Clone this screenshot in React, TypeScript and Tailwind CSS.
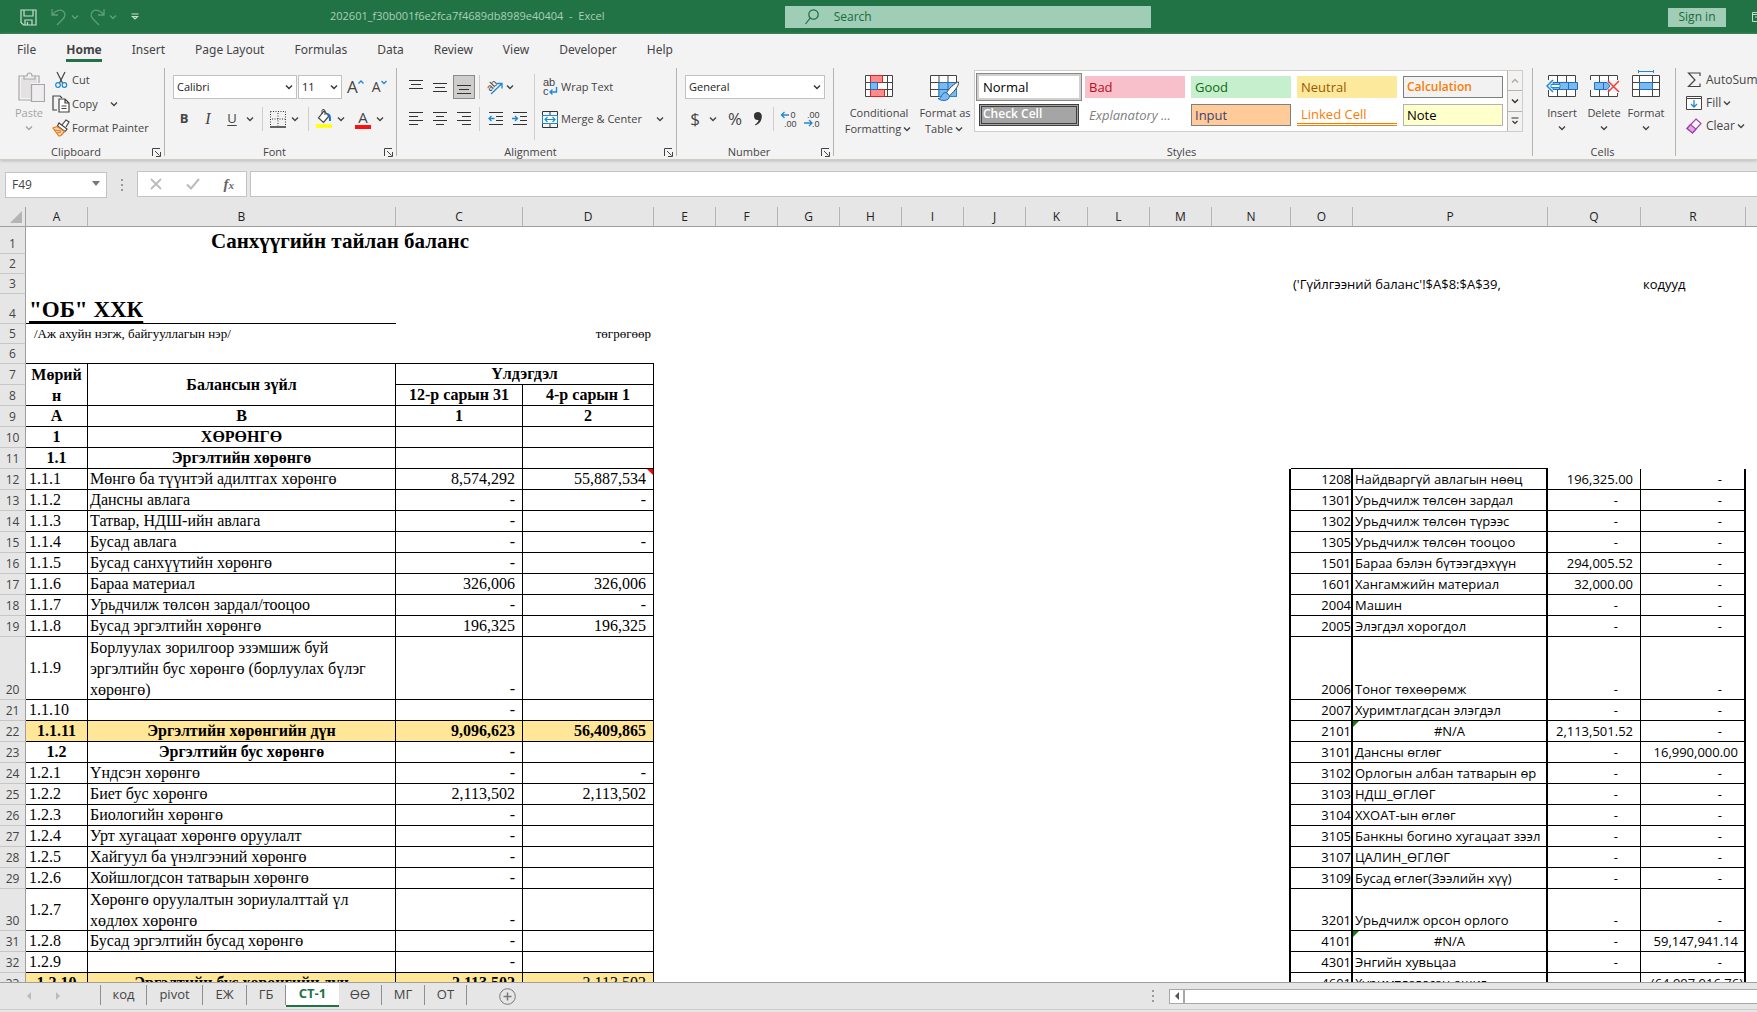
import { ReactNode } from 'react';
import clsx from 'clsx';

type BalanceRow = {
  n: number;
  code: string;
  name: string;
  c?: string;
  d?: string;
  kind?: 'head' | 'total';
  tall?: 2 | 3;
  note?: boolean;
};

const BALANCE: BalanceRow[] = [
  { n: 9, code: 'А', name: 'В', c: '1', d: '2', kind: 'head' },
  { n: 10, code: '1', name: 'ХӨРӨНГӨ', kind: 'head' },
  { n: 11, code: '1.1', name: 'Эргэлтийн хөрөнгө', kind: 'head' },
  { n: 12, code: '1.1.1', name: 'Мөнгө ба түүнтэй адилтгах хөрөнгө', c: '8,574,292', d: '55,887,534', note: true },
  { n: 13, code: '1.1.2', name: 'Дансны авлага', c: '-', d: '-' },
  { n: 14, code: '1.1.3', name: 'Татвар, НДШ-ийн авлага', c: '-' },
  { n: 15, code: '1.1.4', name: 'Бусад авлага', c: '-', d: '-' },
  { n: 16, code: '1.1.5', name: 'Бусад санхүүтийн хөрөнгө', c: '-' },
  { n: 17, code: '1.1.6', name: 'Бараа материал', c: '326,006', d: '326,006' },
  { n: 18, code: '1.1.7', name: 'Урьдчилж төлсөн зардал/тооцоо', c: '-', d: '-' },
  { n: 19, code: '1.1.8', name: 'Бусад эргэлтийн хөрөнгө', c: '196,325', d: '196,325' },
  { n: 20, code: '1.1.9', name: 'Борлуулах зорилгоор эзэмшиж буй эргэлтийн бус хөрөнгө (борлуулах бүлэг хөрөнгө)', c: '-', tall: 3 },
  { n: 21, code: '1.1.10', name: '', c: '-' },
  { n: 22, code: '1.1.11', name: 'Эргэлтийн хөрөнгийн дүн', c: '9,096,623', d: '56,409,865', kind: 'total' },
  { n: 23, code: '1.2', name: 'Эргэлтийн бус хөрөнгө', c: '-', kind: 'head' },
  { n: 24, code: '1.2.1', name: 'Үндсэн хөрөнгө', c: '-', d: '-' },
  { n: 25, code: '1.2.2', name: 'Биет бус хөрөнгө', c: '2,113,502', d: '2,113,502' },
  { n: 26, code: '1.2.3', name: 'Биологийн хөрөнгө', c: '-' },
  { n: 27, code: '1.2.4', name: 'Урт хугацаат хөрөнгө оруулалт', c: '-' },
  { n: 28, code: '1.2.5', name: 'Хайгуул ба үнэлгээний хөрөнгө', c: '-' },
  { n: 29, code: '1.2.6', name: 'Хойшлогдсон татварын хөрөнгө', c: '-' },
  { n: 30, code: '1.2.7', name: 'Хөрөнгө оруулалтын зориулалттай үл хөдлөх хөрөнгө', c: '-', tall: 2 },
  { n: 31, code: '1.2.8', name: 'Бусад эргэлтийн бусад хөрөнгө', c: '-' },
  { n: 32, code: '1.2.9', name: '', c: '-' },
  { n: 33, code: '1.2.10', name: 'Эргэлтийн бус хөрөнгийн дүн', c: '2,113,502', d: '2,113,502', kind: 'total' },
];

// account code, account name, debit, credit - keyed by sheet row
const ACCOUNTS: Record<number, [string, string, string, string]> = {
  12: ['1208', 'Найдваргүй авлагын нөөц', '196,325.00', '-'],
  13: ['1301', 'Урьдчилж төлсөн зардал', '-', '-'],
  14: ['1302', 'Урьдчилж төлсөн түрээс', '-', '-'],
  15: ['1305', 'Урьдчилж төлсөн тооцоо', '-', '-'],
  16: ['1501', 'Бараа бэлэн бүтээгдэхүүн', '294,005.52', '-'],
  17: ['1601', 'Хангамжийн материал', '32,000.00', '-'],
  18: ['2004', 'Машин', '-', '-'],
  19: ['2005', 'Элэгдэл хорогдол', '-', '-'],
  20: ['2006', 'Тоног төхөөрөмж', '-', '-'],
  21: ['2007', 'Хуримтлагдсан элэгдэл', '-', '-'],
  22: ['2101', '#N/A', '2,113,501.52', '-'],
  23: ['3101', 'Дансны өглөг', '-', '16,990,000.00'],
  24: ['3102', 'Орлогын албан татварын өр', '-', '-'],
  25: ['3103', 'НДШ_ӨГЛӨГ', '-', '-'],
  26: ['3104', 'ХХОАТ-ын өглөг', '-', '-'],
  27: ['3105', 'Банкны богино хугацаат зээл', '-', '-'],
  28: ['3107', 'ЦАЛИН_ӨГЛӨГ', '-', '-'],
  29: ['3109', 'Бусад өглөг(Зээлийн хүү)', '-', '-'],
  30: ['3201', 'Урьдчилж орсон орлого', '-', '-'],
  31: ['4101', '#N/A', '-', '59,147,941.14'],
  32: ['4301', 'Энгийн хувьцаа', '-', '-'],
  33: ['4601', 'Хуримтлагдсан ашиг', '', '(64,997,916.76)'],
};

const COLUMNS = 'ABCDEFGHIJKLMNOPQR'.split('');
const COL_WIDTHS = [
  'w-[26px]', 'w-[62px]', 'w-[308px]', 'w-[127px]', 'w-[131px]',
  'w-[62px]', 'w-[62px]', 'w-[62px]', 'w-[62px]', 'w-[62px]', 'w-[62px]', 'w-[62px]', 'w-[62px]', 'w-[62px]',
  'w-[79px]', 'w-[62px]', 'w-[195px]', 'w-[93px]', 'w-[105px]',
];

function Chevron({ className }: { className?: string }) {
  return (
    <svg viewBox="0 0 12 12" className={clsx('w-3 h-3 shrink-0', className)} fill="none" stroke="currentColor" strokeWidth="1.4">
      <path d="M3 4.5l3 3 3-3" />
    </svg>
  );
}

function Sep() {
  return <div className="w-px h-6 bg-[#d0cecc]" />;
}

function Group({ label, launcher = true, className, children }: { label: string; launcher?: boolean; className?: string; children: ReactNode }) {
  return (
    <section className={clsx('flex flex-col h-[94px] shrink-0', className)}>
      <div className="flex flex-1">{children}</div>
      <div className="flex items-center h-4 pr-[3px]">
        <span className="flex-1 text-center">{label}</span>
        {launcher && (
          <button aria-label={`${label} settings`}>
            <svg viewBox="0 0 9 9" className="w-[9px] h-[9px]" fill="none" stroke="#444" strokeWidth="1">
              <path d="M.5 8V.5H8M3 3l4.5 4.5M8.500 4v4.500H4" />
            </svg>
          </button>
        )}
      </div>
    </section>
  );
}

function GroupLine() {
  return <div className="w-px h-[88px] mt-0.5 bg-[#b5b3b0] shrink-0" />;
}

function AlignIcon({ lines }: { lines: [number, number, number][] }) {
  return (
    <svg viewBox="0 0 14 16" className="w-[14px] h-4" stroke="#333" strokeWidth="1">
      {lines.map(([x1, x2, y]) => <path key={y} d={`M${x1} ${y}.5H${x2}`} />)}
    </svg>
  );
}

function IconButton({ label, active, children }: { label: string; active?: boolean; children: ReactNode }) {
  return (
    <button
      aria-label={label}
      className={clsx('w-[22px] h-6 flex items-center justify-center', active && 'bg-[#cfcdcb] border border-[#8c8a88]')}
    >
      {children}
    </button>
  );
}

function BigButton({ className, icon, children }: { className?: string; icon: ReactNode; children: ReactNode }) {
  return (
    <button className={clsx('flex flex-col items-center pt-[5px] leading-4 self-start', className)}>
      {icon}
      <span className="flex flex-col items-center mt-1 whitespace-nowrap">{children}</span>
    </button>
  );
}

function TitleBar() {
  return (
    <header className="flex items-center h-[34px] shrink-0 bg-[#217346] text-[#a9cfb8] text-[11px]">
      <div className="flex items-center pl-5 w-[330px] shrink-0">
        <button aria-label="Save">
          <svg viewBox="0 0 17 17" className="w-[17px] h-[17px]" fill="none" stroke="#c4dfce" strokeWidth="1.2">
            <path d="M1 1h15v15H3.500L1 13.500zM4 1v6h9V1M5 16v-5h7v5M7.500 13v3" />
          </svg>
        </button>
        <button aria-label="Undo" className="flex items-center ml-3.5 text-[#5f9d7b]">
          <svg viewBox="0 0 16 18" className="w-4 h-[18px]" fill="none" stroke="currentColor" strokeWidth="1.3">
            <path d="M1 1v6h6M1.500 6.500C5 2 10 1 12.500 3.500c3 3 1 6-1.500 8.500l-5 5" />
          </svg>
          <Chevron className="ml-0.5" />
        </button>
        <button aria-label="Redo" className="flex items-center ml-2 text-[#5f9d7b]">
          <svg viewBox="0 0 16 18" className="w-4 h-[18px]" fill="none" stroke="currentColor" strokeWidth="1.3">
            <path d="M15 1v6H9M14.500 6.500C11 2 6 1 3.500 3.500c-3 3-1 6 1.500 8.500l5 5" />
          </svg>
          <Chevron className="ml-0.5" />
        </button>
        <button aria-label="Customize toolbar" className="ml-3">
          <svg viewBox="0 0 8 8" className="w-2 h-2" fill="none" stroke="#c4dfce" strokeWidth="1.2">
            <path d="M.5 1h7M1.500 3.500L4 6l2.500-2.500z" />
          </svg>
        </button>
      </div>
      <span className="flex-[3_3_0%] min-w-[272px] pb-0.5 whitespace-pre">202601_f30b001f6e2fca7f4689db8989e40404  -  Excel</span>
      <label className="flex items-center w-[366px] h-[22px] bg-[#a0cdb5] text-[#1c6b40] text-xs">
        <svg viewBox="0 0 14 16" className="w-[14px] h-4 ml-5 shrink-0" fill="none" stroke="currentColor" strokeWidth="1.2">
          <circle cx="8.500" cy="5.500" r="4.700" />
          <path d="M5.200 9L.5 15" />
        </svg>
        <input aria-label="Search" placeholder="Search" className="flex-1 ml-[15px] min-w-0 bg-transparent outline-none placeholder:text-[#1c6b40]" />
      </label>
      <div className="flex flex-[4_4_0%] items-center justify-end overflow-hidden">
        <button className="w-[58px] h-[19px] bg-[#a0cdb5] text-[#1c6b40] text-xs leading-[18px]">Sign in</button>
        <svg viewBox="0 0 5 10" className="w-[5px] h-[10px] ml-[26px] shrink-0" fill="none" stroke="#c4dfce">
          <path d="M5 .5H.5v9H5M.5 2.500H5M3 5h2" />
        </svg>
      </div>
    </header>
  );
}

function Tabs() {
  const tabs = ['File', 'Home', 'Insert', 'Page Layout', 'Formulas', 'Data', 'Review', 'View', 'Developer', 'Help'];
  return (
    <nav className="flex h-8 shrink-0 pl-[17px] gap-[30px] pt-[7px] text-xs text-[#444] font-['Noto_Sans',sans-serif]">
      {tabs.map((t) => (
        <button
          key={t}
          className={clsx('h-[21px] leading-[18px] whitespace-nowrap flex flex-col', t === 'Home' && 'font-bold border-b-[3px] border-[#217346]')}
        >
          {t}
        </button>
      ))}
    </nav>
  );
}

function Clipboard() {
  return (
    <Group label="Clipboard" className="w-[164px]">
      <button className="flex flex-col items-center w-8 ml-[13px] pt-1.5 self-start leading-4 text-[#a6a4a2]">
        <svg viewBox="0 0 27 30" className="w-[27px] h-[30px] ml-1" fill="none" stroke="#a8a6a4" strokeWidth="1.2">
          <path d="M6 4H1v24h12M17 4h4v7" />
          <path d="M3 6h16v5h-6v15H3z" fill="#e3e1e1" stroke="none" />
          <path d="M6 7V4h3c0-4 5-4 5 0h3v3z" fill="#f3f2f1" />
          <path d="M13.500 12.500h13v17h-13z" fill="#efedf0" />
        </svg>
        <span className="mt-[3px]">Paste</span>
        <Chevron className="mt-px" />
      </button>
      <div className="flex flex-col ml-[7px] pt-0.5">
        <button className="flex items-center h-6">
          <svg viewBox="0 0 16 18" className="w-[18px] h-[18px] mr-0.5" fill="none" strokeWidth="1.200">
            <path d="M4 1l5.500 11M12 1L6.500 12" stroke="#444" />
            <circle cx="5" cy="14" r="2.300" stroke="#1e88d2" />
            <circle cx="11.400" cy="14" r="2.300" stroke="#1e88d2" />
          </svg>
          Cut
        </button>
        <button className="flex items-center h-6">
          <svg viewBox="0 0 18 18" className="w-[18px] h-[18px] mr-0.5" fill="none" stroke="#444" strokeWidth="1.200">
            <path d="M5 15H1V1h7l2 2" />
            <path d="M7 4h6l4 4v9H7zM13 4v4h4M9.500 11h5M9.500 13.500h5" fill="#fff" />
          </svg>
          Copy
          <Chevron className="ml-2.5" />
        </button>
        <button className="flex items-center h-6 whitespace-nowrap">
          <svg viewBox="0 0 18 18" className="w-[18px] h-[18px] mr-0.5" fill="none" strokeWidth="1.200">
            <path d="M10 6l4-5 3 2-3 5" stroke="#444" fill="#fff" />
            <path d="M7 4l8 6-2 2.500L5.500 7z" stroke="#444" fill="#fff" />
            <path d="M5 7.500L1 9l6 8 2-.5 3.500-4z" stroke="#e07a1f" fill="#fbd9b0" />
            <path d="M3 11l6 1M5 14l4-1" stroke="#e07a1f" />
          </svg>
          Format Painter
        </button>
      </div>
    </Group>
  );
}

function SelectBox({ label, value, options, className }: { label: string; value: string; options: string[]; className: string }) {
  return (
    <div className={clsx('relative h-6 shrink-0', className)}>
      <select aria-label={label} defaultValue={value} className="appearance-none w-full h-full pl-[3px] bg-white border border-[#c3c1bf] text-[#222]">
        {options.map((o) => <option key={o}>{o}</option>)}
      </select>
      <Chevron className="absolute right-0.5 top-1.5 text-[#333] pointer-events-none" />
    </div>
  );
}

function FontGroup() {
  return (
    <Group label="Font" className="w-[231px]">
      <div className="flex flex-col gap-2 pt-[9px]">
        <div className="flex items-center h-6 pl-2">
          <SelectBox label="Font" value="Calibri" options={['Calibri', 'Arial', 'Times New Roman']} className="w-[124px]" />
          <SelectBox label="Font size" value="11" options={['10', '11', '12']} className="w-[44px] ml-px" />
          <button className="flex ml-[5px] text-[17px] leading-6" aria-label="Increase font size">
            A
            <svg viewBox="0 0 6 6" className="w-1.5 h-1.5 mt-1" fill="none" stroke="#1e88d2" strokeWidth="1.3"><path d="M.5 4.500L3 2l2.500 2.500" /></svg>
          </button>
          <button className="flex ml-2 text-sm leading-6" aria-label="Decrease font size">
            A
            <svg viewBox="0 0 6 6" className="w-1.5 h-1.5 mt-1" fill="none" stroke="#1e88d2" strokeWidth="1.3"><path d="M.5 2L3 4.500 5.500 2" /></svg>
          </button>
        </div>
        <div className="flex items-center h-6 pl-[7px] text-[13px]">
          <button className="w-6 font-bold">B</button>
          <button className="w-6 italic font-['Liberation_Serif',serif] text-base">I</button>
          <button className="w-6 underline underline-offset-2">U</button>
          <Chevron />
          <div className="ml-1.5 mr-[7px]"><Sep /></div>
          <button aria-label="Borders">
            <svg viewBox="0 0 16 17" className="w-4 h-[17px]" fill="none" stroke="#333">
              <path d="M.5.5h15M.5.5v15M15.500.5v15M8 2v13M2 8h13" strokeDasharray="1 1.500" />
              <path d="M0 16h16" strokeWidth="1.500" />
            </svg>
          </button>
          <Chevron className="ml-[3px]" />
          <div className="ml-[7px] mr-1.5"><Sep /></div>
          <button aria-label="Fill color">
            <svg viewBox="0 0 18 20" className="w-[18px] h-5" fill="none">
              <path d="M9 2L3.500 9l5 4.500L14 7z" fill="#fff" stroke="#444" strokeWidth="1.200" />
              <path d="M7 5V1.500c0-1.500 3-1.500 3 .5v4" stroke="#444" />
              <path d="M12 5c3 0 3 3 3 7" stroke="#1e6fc0" strokeWidth="2" />
              <path d="M1 15h16v4H1z" fill="#ffff20" />
            </svg>
          </button>
          <Chevron className="ml-0.5" />
          <button aria-label="Font color" className="flex flex-col items-center w-[18px] ml-[7px] text-[15px] leading-4">
            A
            <span className="w-4 h-1 bg-[#ff1010]" />
          </button>
          <Chevron className="ml-0.5" />
        </div>
      </div>
    </Group>
  );
}

function AlignmentGroup() {
  return (
    <Group label="Alignment" className="w-[279px]">
      <div className="flex flex-col gap-2 pt-[9px] pl-2 w-[137px]">
        <div className="flex items-center h-6">
          <div className="flex gap-0.5 mr-1">
            <IconButton label="Top align"><AlignIcon lines={[[0, 14, 1], [2, 12, 5], [0, 14, 9]]} /></IconButton>
            <IconButton label="Middle align"><AlignIcon lines={[[0, 14, 4], [2, 12, 8], [0, 14, 12]]} /></IconButton>
            <IconButton label="Bottom align" active><AlignIcon lines={[[0, 14, 6], [2, 12, 10], [0, 14, 14]]} /></IconButton>
          </div>
          <Sep />
          <button aria-label="Orientation" className="flex items-center ml-1.5">
            <svg viewBox="0 0 18 18" className="w-[18px] h-[18px] overflow-visible" fill="none">
              <text x="1" y="10" fontSize="10" fill="#444" fontFamily="Liberation Sans, sans-serif" transform="rotate(-45 7 8)">ab</text>
              <path d="M5 16L15.500 6M11 5.500h5v5" stroke="#1e88d2" strokeWidth="1.300" />
            </svg>
            <Chevron />
          </button>
        </div>
        <div className="flex items-center h-6">
          <div className="flex gap-0.5 mr-1">
            <IconButton label="Align left"><AlignIcon lines={[[0, 14, 1], [0, 9, 5], [0, 14, 9], [0, 9, 13]]} /></IconButton>
            <IconButton label="Center"><AlignIcon lines={[[0, 14, 1], [3, 11, 5], [0, 14, 9], [3, 11, 13]]} /></IconButton>
            <IconButton label="Align right"><AlignIcon lines={[[0, 14, 1], [5, 14, 5], [0, 14, 9], [5, 14, 13]]} /></IconButton>
          </div>
          <Sep />
          <div className="flex gap-0.5 ml-1">
            <IconButton label="Decrease indent">
              <svg viewBox="0 0 15 16" className="w-[15px] h-4" fill="none" stroke="#333">
                <path d="M1 1.500h14M8 5.500h7M8 9.500h7M1 13.500h14" />
                <path d="M6.500 7.500H1M3.500 5L1 7.500 3.500 10" stroke="#1e88d2" strokeWidth="1.300" />
              </svg>
            </IconButton>
            <IconButton label="Increase indent">
              <svg viewBox="0 0 15 16" className="w-[15px] h-4" fill="none" stroke="#333">
                <path d="M1 1.500h14M8 5.500h7M8 9.500h7M1 13.500h14" />
                <path d="M0 7.500h5.500M3 5l2.500 2.500L3 10" stroke="#1e88d2" strokeWidth="1.300" />
              </svg>
            </IconButton>
          </div>
        </div>
      </div>
      <div className="w-px h-[66px] mt-2 bg-[#d0cecc]" />
      <div className="flex flex-col gap-2 pt-[9px] pl-[7px]">
        <button className="flex items-center h-6">
          <svg viewBox="0 0 16 20" className="w-4 h-5 mr-[3px] overflow-visible" fill="none">
            <text x="1" y="9" fontSize="11" fill="#444" fontFamily="Liberation Sans, sans-serif">ab</text>
            <text x="1" y="18" fontSize="11" fill="#444" fontFamily="Liberation Sans, sans-serif">c</text>
            <path d="M14.500 10v5H8M10.500 12.500L8 15l2.500 2.500" stroke="#1e88d2" strokeWidth="1.400" />
          </svg>
          Wrap Text
        </button>
        <button className="flex items-center h-6 whitespace-nowrap">
          <svg viewBox="0 0 16 17" className="w-4 h-[17px] mr-[3px]" fill="none">
            <path d="M.5.5h15v16H.5zM8 .5v4M8 12.500v4" stroke="#333" />
            <path d="M.5 4.500h15v8H.5z" fill="#fff" stroke="#1e88d2" />
            <path d="M3 8.500h10M5.500 6L3 8.500 5.500 11M10.500 6L13 8.500 10.500 11" stroke="#1e88d2" strokeWidth="1.200" />
          </svg>
          Merge &amp; Center
          <Chevron className="ml-3" />
        </button>
      </div>
    </Group>
  );
}

function NumberGroup() {
  return (
    <Group label="Number" className="w-[156px]">
      <div className="flex flex-col gap-2 pt-[9px] pl-2">
        <SelectBox label="Number format" value="General" options={['General', 'Number', 'Currency']} className="w-[140px]" />
        <div className="flex items-center h-6 text-[17px]">
          <button className="w-5 text-center">$</button>
          <Chevron className="ml-0.5" />
          <button className="w-5 ml-1.5">%</button>
          <button aria-label="Comma style" className="ml-2">
            <svg viewBox="0 0 10 16" className="w-[10px] h-4" fill="#333">
              <path d="M4.500 1a4 4 0 014.300 4.500C8.800 10 6 13 2.500 14.500l-.5-1c2-1.200 3.500-3 3.500-4.500A4 4 0 014.500 1z" />
            </svg>
          </button>
          <div className="ml-2.5 mr-1.5"><Sep /></div>
          <button aria-label="Increase decimal">
            <svg viewBox="0 0 17 18" className="w-[17px] h-[18px] overflow-visible" fill="none">
              <text x="10.500" y="8" fontSize="9" fill="#444" fontFamily="Liberation Sans, sans-serif">0</text>
              <text x="4" y="17" fontSize="9" fill="#444" fontFamily="Liberation Sans, sans-serif">.00</text>
              <path d="M9 5H1.500M4.500 2L1.500 5l3 3" stroke="#1e88d2" strokeWidth="1.300" />
            </svg>
          </button>
          <button aria-label="Decrease decimal" className="ml-[7px]">
            <svg viewBox="0 0 17 18" className="w-[17px] h-[18px] overflow-visible" fill="none">
              <text x="3" y="8" fontSize="9" fill="#444" fontFamily="Liberation Sans, sans-serif">.00</text>
              <text x="8" y="17" fontSize="9" fill="#444" fontFamily="Liberation Sans, sans-serif">.0</text>
              <path d="M0 13h8M5 10l3 3-3 3" stroke="#1e88d2" strokeWidth="1.300" />
            </svg>
          </button>
        </div>
      </div>
    </Group>
  );
}

function StylesGroup() {
  const cell = 'h-[22px] px-1 text-left leading-[20px] text-[13px] whitespace-nowrap';
  return (
    <Group label="Styles" launcher={false} className="flex-1 min-w-0">
      <BigButton
        className="w-[74px] ml-2"
        icon={
          <svg viewBox="0 0 28 30" className="w-7 h-[30px]" fill="none" stroke="#444">
            <path d="M.5 4.500h27v21H.5zM5.500 4.500v21M22.500 4.500v21M.5 11.500h27M.5 18.500h27" fill="#fff" />
            <path d="M5.500 4.500h12v7h-12zM5.500 18.500h14v7h-14z" fill="#ff8a8a" stroke="#d22" />
            <path d="M5.500 11.500h7v7h-7z" fill="#7db9ee" stroke="#1e6fc0" />
          </svg>
        }
      >
        <span>Conditional</span>
        <span className="flex items-center">Formatting<Chevron /></span>
      </BigButton>
      <BigButton
        className="w-[58px]"
        icon={
          <svg viewBox="0 0 30 30" className="w-[30px] h-[30px]" fill="none" stroke="#444">
            <path d="M.5 4.500h26v21H.5zM9 4.500v21M18 4.500v21M.5 11.500h26M.5 18.500h26" fill="#fff" />
            <path d="M9 11.500h17.500v14H9z" fill="#7db9ee" stroke="#1e88d2" />
            <path d="M9 11.500h17.500M18 11.500v14M9 18.500h17.500" stroke="#1e6fc0" />
            <path d="M28.500 11c-3 0-11 8-12 11l3 2.500c3-2 10-10 9-13.500z" fill="#fff" />
            <path d="M16 21.500c-3 0-4 2-4.500 4-.5 1.500-2 2-3.500 2 3 3 12 3 11.500-3z" fill="#7db9ee" stroke="#1e6fc0" />
          </svg>
        }
      >
        <span>Format as</span>
        <span className="flex items-center">Table<Chevron /></span>
      </BigButton>
      <div className="flex flex-1 min-w-0 h-[62px] mt-1 mr-[9px] bg-white border border-[#cfcdcb]">
        <div className="grid grid-cols-5 gap-x-1.5 gap-y-1.5 flex-1 min-w-0 pt-[5px] px-1 content-start text-black">
          <button className={clsx(cell, 'shadow-[0_0_0_2px_#d2d0ce,0_0_0_3px_#8a8886]')}>Normal</button>
          <button className={clsx(cell, 'bg-[#f8c0cb] text-[#b80f1a]')}>Bad</button>
          <button className={clsx(cell, 'bg-[#c6efce] text-[#0b6b12]')}>Good</button>
          <button className={clsx(cell, 'bg-[#fde99b] text-[#9c5700]')}>Neutral</button>
          <button className="h-[22px] px-[3px] text-left leading-[18px] text-xs font-semibold bg-[#f2f2f2] border border-[#7f7f7f] text-[#fa7d00]">Calculation</button>
          <button className="h-[22px] px-px text-left leading-[14px] pb-0.5 text-xs font-semibold bg-[#a5a5a5] border-[3px] border-double border-[#3f3f3f] text-white">Check Cell</button>
          <button className={clsx(cell, 'italic text-[#7f7f7f]')}>Explanatory ...</button>
          <button className="h-[22px] px-[3px] text-left leading-[18px] text-[13px] bg-[#ffcc99] border border-[#7f7f7f] text-[#3f3f76]">Input</button>
          <button className="h-[22px] px-1 text-left leading-[18px] text-[13px] border-b-[3px] border-double border-[#fa7d00] text-[#fa7d00]">Linked Cell</button>
          <button className="h-[22px] px-[3px] text-left leading-[18px] text-[13px] bg-[#ffffcc] border border-[#b2b2b2]">Note</button>
        </div>
        <div className="flex flex-col w-[15px] bg-[#f3f2f1] border-l border-[#b5b3b0] text-[#333]">
          <button aria-label="Previous styles" className="flex flex-1 items-center justify-center text-[#aaa]"><Chevron className="rotate-180" /></button>
          <button aria-label="Next styles" className="flex flex-1 items-center justify-center border-y border-[#b5b3b0]"><Chevron /></button>
          <button aria-label="More styles" className="flex flex-1 items-center justify-center">
            <svg viewBox="0 0 8 8" className="w-2 h-2" fill="none" stroke="currentColor" strokeWidth="1.2"><path d="M.5 1h7M1.500 4L4 6.500 6.500 4" /></svg>
          </button>
        </div>
      </div>
    </Group>
  );
}

function CellsGroup() {
  return (
    <Group label="Cells" launcher={false} className="w-[142px]">
      <div className="flex pl-2">
        <BigButton
          className="w-[42px]"
          icon={
            <svg viewBox="0 0 32 30" className="w-8 h-[30px]" fill="none" stroke="#444">
              <path d="M2.500 9V4.500h27V11M2.500 19v6.500h27V19M11.500 4.500v7M20.500 4.500v7M11.500 18.500v7M20.500 18.500v7" fill="#fff" />
              <path d="M7 11.500h24.500v7H7z" fill="#7db9ee" stroke="#1e6fc0" />
              <path d="M22.500 11.500v7M13.500 11.500v7" stroke="#1e6fc0" />
              <path d="M14 13.500H5v3h9z" fill="#fff" stroke="#1e88d2" />
              <path d="M7 9l-6 6 6 6" stroke="#1e88d2" strokeWidth="1.500" />
            </svg>
          }
        >
          <span>Insert</span>
          <Chevron className="mt-px" />
        </BigButton>
        <BigButton
          className="w-[42px]"
          icon={
            <svg viewBox="0 0 32 30" className="w-8 h-[30px]" fill="none" stroke="#444">
              <path d="M2.500 9V4.500h27V9M2.500 19v6.500h27V22M11.500 4.500v7M20.500 4.500v7M11.500 18.500v7M20.500 18.500v7" fill="#fff" />
              <path d="M6.500 11.500H19l3 3.500-3 3.500H6.500zM15.500 11.500v7" fill="#7db9ee" stroke="#1e6fc0" />
              <path d="M20 10l11 11M31 10L20 21" stroke="#e8413c" strokeWidth="1.500" />
            </svg>
          }
        >
          <span>Delete</span>
          <Chevron className="mt-px" />
        </BigButton>
        <BigButton
          className="w-[42px]"
          icon={
            <svg viewBox="0 0 28 30" className="w-7 h-[30px] overflow-visible" fill="none" stroke="#444">
              <path d="M.5 4.500h27v21H.5zM7.500 4.500v21M20.500 4.500v21M.5 11.500h27M.5 18.500h27" fill="#fff" />
              <path d="M7.500 11.500h13v7h-13z" fill="#7db9ee" stroke="#1e6fc0" />
              <path d="M6.500.5h15M6.500-1v3M21.500-1v3" stroke="#1e88d2" />
            </svg>
          }
        >
          <span>Format</span>
          <Chevron className="mt-px" />
        </BigButton>
      </div>
    </Group>
  );
}

function EditingGroup() {
  return (
    <div className="flex flex-col w-[81px] pl-2.5 pt-0.5 overflow-hidden shrink-0 text-xs">
      <button className="flex items-center h-[23px] whitespace-nowrap">
        <svg viewBox="0 0 16 16" className="w-4 h-4 mr-1 shrink-0" fill="none" stroke="#444" strokeWidth="1.200"><path d="M14 4V1H2.500L9 8l-6.500 6.500H14v-3" /></svg>
        AutoSum
      </button>
      <button className="flex items-center h-[23px]">
        <svg viewBox="0 0 16 16" className="w-4 h-4 mr-1 shrink-0" fill="none" stroke="#444">
          <path d="M.5 1.500h15v13H.5zM.5 3.500h15" fill="#fff" />
          <path d="M8 5v7M5 9l3 3 3-3" stroke="#1e88d2" strokeWidth="1.300" />
        </svg>
        Fill<Chevron />
      </button>
      <button className="flex items-center h-[23px]">
        <svg viewBox="0 0 16 16" className="w-4 h-4 mr-1 shrink-0" fill="none" stroke="#a33fa8" strokeWidth="1.200">
          <path d="M10 1l5 4.500-8.500 9.500L1 10.500z" fill="#fff" />
          <path d="M4.500 6.500L1 10.500 6.500 15l3.500-4z" fill="#e3a5e6" />
        </svg>
        Clear<Chevron />
      </button>
    </div>
  );
}

function Ribbon() {
  return (
    <div className="relative shrink-0 h-[126px] bg-[#f4f3f4] border-b border-[#cfccc4] shadow-[0_1px_3px_#bbb] z-10 text-[#444]">
      <Tabs />
      <div className="flex text-[11px]">
        <Clipboard />
        <GroupLine />
        <FontGroup />
        <GroupLine />
        <AlignmentGroup />
        <GroupLine />
        <NumberGroup />
        <GroupLine />
        <StylesGroup />
        <GroupLine />
        <CellsGroup />
        <GroupLine />
        <EditingGroup />
      </div>
    </div>
  );
}

function FormulaBar() {
  return (
    <div className="flex shrink-0 h-[47px] pt-[11px] pl-[5px] bg-[#e6e6e6] text-[#444]">
      <div className="relative w-[102px] h-[26px]">
        <input aria-label="Name box" defaultValue="F49" className="w-full h-full pl-1.5 bg-white border border-[#c3c3c3] text-xs" />
        <svg viewBox="0 0 8 5" className="absolute right-[7px] top-[10px] w-2 h-[5px]" fill="#777"><path d="M0 0h8L4 5z" /></svg>
      </div>
      <svg viewBox="0 0 2 12" className="w-0.5 h-3 mx-[14px] mt-2" fill="#999"><path d="M0 0h2v2H0zM0 5h2v2H0zM0 10h2v2H0z" /></svg>
      <div className="flex items-center justify-around w-[110px] h-[26px] bg-white border border-[#c3c3c3]">
        <button aria-label="Cancel">
          <svg viewBox="0 0 12 12" className="w-3 h-3" stroke="#bbb" strokeWidth="1.800"><path d="M1 1l10 10M11 1L1 11" /></svg>
        </button>
        <button aria-label="Enter">
          <svg viewBox="0 0 14 12" className="w-[14px] h-3" fill="none" stroke="#bbb" strokeWidth="2"><path d="M1 6.500L5 10.500 13 1" /></svg>
        </button>
        <button className="italic font-bold font-['Liberation_Serif',serif] text-[15px] leading-5 text-[#666]">f<span className="text-[11px]">x</span></button>
      </div>
      <input aria-label="Formula" className="flex-1 h-[26px] ml-[3px] bg-white border border-r-0 border-[#c3c3c3]" />
    </div>
  );
}

function RowHead({ n }: { n: number }) {
  return (
    <th scope="row" className="align-bottom bg-[#e6e6e6] border-r border-b border-r-[#9f9f9f] border-b-[#c6c6c6] text-xs leading-[19px] font-normal text-[#444]">
      {n}
    </th>
  );
}

function AccountCells({ n }: { n: number }) {
  const acc = ACCOUNTS[n];
  if (!acc) {
    const edge = n === 11 && 'border-b border-black';
    return (
      <>
        <td colSpan={10} />
        <td className={clsx(edge)} />
        <td className={clsx(edge)} />
        <td colSpan={3} />
      </>
    );
  }
  const [code, name, debit, credit] = acc;
  const base = 'align-bottom border-black border-b leading-5 text-[13px] whitespace-nowrap font-[\'Open_Sans\',sans-serif]';
  return (
    <>
      <td colSpan={9} />
      <td className="border-r-2 border-black" />
      <td className={clsx(base, 'border-r-2 text-right')}>{code}</td>
      <td className={clsx(base, 'relative border-r-2', name === '#N/A' ? 'text-center' : 'pl-0.5')}>
        {name === '#N/A' && (
          <svg viewBox="0 0 6 6" className="absolute left-0 top-0 w-1.5 h-1.5" fill="#107c10"><path d="M0 0h6L0 6z" /></svg>
        )}
        {name}
      </td>
      <td className={clsx(base, 'border-r text-right', debit === '-' ? 'pr-[22px]' : 'pr-[7px]')}>{debit}</td>
      <td className={clsx(base, 'border-r-2 text-right', n === 33 ? 'pr-px' : credit === '-' ? 'pr-[22px]' : 'pr-1.5')}>{credit}</td>
      <td />
    </>
  );
}

function SheetRow({ row }: { row: BalanceRow }) {
  const { n, code, name, c, d, kind, tall, note } = row;
  const strong = kind !== undefined;
  const base = clsx('border-r border-b border-black', kind === 'total' && 'bg-[#ffe699]');
  const num = clsx(base, 'align-bottom', n === 9 ? 'text-center' : 'text-right pr-[7px]');
  return (
    <tr className={clsx(tall === 3 ? 'h-[63px]' : tall === 2 ? 'h-[42px]' : 'h-[21px]')}>
      <RowHead n={n} />
      <td className={clsx(base, strong ? 'text-center font-bold' : 'pl-[3px]')}>{code}</td>
      <td className={clsx(base, strong ? 'text-center font-bold' : 'pl-0.5 pr-6')}>
        {tall ? <span className="block -my-px leading-[21px]">{name}</span> : name}
      </td>
      <td className={clsx(num, strong && 'font-bold')}>{c}</td>
      <td className={clsx(num, 'relative', strong && n !== 33 && 'font-bold')}>
        {note && <svg viewBox="0 0 6 6" className="absolute right-0 top-0 w-1.5 h-1.5" fill="#f00"><path d="M0 0h6v6z" /></svg>}
        {d}
      </td>
      <AccountCells n={n} />
    </tr>
  );
}

function Sheet() {
  const head = 'border-r border-b border-black font-bold text-center';
  return (
    <main className="flex-1 min-h-0 overflow-hidden bg-white">
      <table className="w-full table-fixed border-separate border-spacing-0 font-['Liberation_Serif',serif] text-base leading-5 text-black">
        <colgroup>
          {COL_WIDTHS.map((w, i) => <col key={i} className={w} />)}
          <col />
        </colgroup>
        <thead className="bg-[#e6e6e6] font-['Open_Sans',sans-serif] text-xs text-[#222]">
          <tr className="h-5">
            <th aria-label="Select all" className="border-r border-b border-[#9f9f9f]">
              <svg viewBox="0 0 12 12" className="w-3 h-3 ml-auto mr-[3px]" fill="#b4b4b4"><path d="M12 0v12H0z" /></svg>
            </th>
            {COLUMNS.map((c) => (
              <th key={c} scope="col" className="border-r border-b border-r-[#b4b4b4] border-b-[#9f9f9f] font-normal leading-[19px]">{c}</th>
            ))}
            <th className="border-b border-[#9f9f9f]" />
          </tr>
        </thead>
        <tbody className="[&_th]:font-['Open_Sans',sans-serif]">
          <tr className="h-[27px]">
            <RowHead n={1} />
            <td colSpan={4} className="text-center font-bold text-[21px] leading-[26px]">Санхүүгийн тайлан баланс</td>
            <td colSpan={15} />
          </tr>
          <tr className="h-5">
            <RowHead n={2} />
            <td colSpan={19} />
          </tr>
          <tr className="h-5">
            <RowHead n={3} />
            <td colSpan={14} />
            <td colSpan={3} className="pl-0.5 text-[13px] font-['Open_Sans',sans-serif] whitespace-nowrap">('Гүйлгээний баланс'!$A$8:$A$39,</td>
            <td colSpan={2} className="pl-0.5 text-[13px] font-['Open_Sans',sans-serif]">кодууд</td>
          </tr>
          <tr className="h-[30px]">
            <RowHead n={4} />
            <td colSpan={2} className="align-bottom border-b border-black pl-[3px] font-bold text-[23px] leading-[26px] underline decoration-2 underline-offset-4">"ОБ" ХХК</td>
            <td colSpan={17} />
          </tr>
          <tr className="h-5 text-[13px]">
            <RowHead n={5} />
            <td colSpan={3} className="pl-2">/Аж ахуйн нэгж, байгууллагын нэр/</td>
            <td className="text-right pr-[3px]">төгрөгөөр</td>
            <td colSpan={15} />
          </tr>
          <tr className="h-5">
            <RowHead n={6} />
            <td colSpan={4} className="border-b border-black" />
            <td colSpan={15} />
          </tr>
          <tr className="h-[21px]">
            <RowHead n={7} />
            <td rowSpan={2} className={head}><span className="block -my-px leading-[21px]">Мөрий<br />н</span></td>
            <td rowSpan={2} className={head}>Балансын зүйл</td>
            <td colSpan={2} className={head}>Үлдэгдэл</td>
            <td colSpan={15} />
          </tr>
          <tr className="h-[21px]">
            <RowHead n={8} />
            <td className={head}>12-р сарын 31</td>
            <td className={head}>4-р сарын 1</td>
            <td colSpan={15} />
          </tr>
          {BALANCE.map((row) => <SheetRow key={row.n} row={row} />)}
        </tbody>
      </table>
    </main>
  );
}

function SheetTabs() {
  const tabs: [string, string][] = [
    ['код', 'w-[47px]'], ['pivot', 'w-[56px]'], ['ЕЖ', 'w-[44px]'], ['ГБ', 'w-[39px]'],
    ['СТ-1', 'w-[53px]'], ['ӨӨ', 'w-[43px]'], ['МГ', 'w-[43px]'], ['ОТ', 'w-[42px]'],
  ];
  return (
    <footer className="flex shrink-0 h-[30px] bg-[#e6e6e6] border-t border-[#9f9f9f] text-[13px] text-[#444]">
      <div className="flex flex-1 h-[27px] border-b border-[#d0cec8]">
        <button aria-label="Previous sheet" className="ml-[27px]"><svg viewBox="0 0 4 8" className="w-1 h-2" fill="#bbb"><path d="M4 0v8L0 4z" /></svg></button>
        <button aria-label="Next sheet" className="ml-[25px] mr-10"><svg viewBox="0 0 4 8" className="w-1 h-2" fill="#bbb"><path d="M0 0v8l4-4z" /></svg></button>
        <div className="flex h-6">
          {tabs.map(([name, w]) => name === 'СТ-1' ? (
            <button key={name} className={clsx(w, 'h-6 bg-white border-b-2 border-[#217346] font-bold text-[#217346]')}>{name}</button>
          ) : (
            <button key={name} className={clsx(w, 'h-5 mt-0.5 border-r border-[#8f8f8f] first:border-l')}>{name}</button>
          ))}
        </div>
        <button aria-label="New sheet" className="ml-8">
          <svg viewBox="0 0 17 17" className="w-[17px] h-[17px]" fill="none" stroke="#777"><circle cx="8.500" cy="8.500" r="7.800" /><path d="M8.500 4.500v8M4.500 8.500h8" strokeWidth="1.500" /></svg>
        </button>
        <div className="flex items-center w-[605px] ml-auto">
          <svg viewBox="0 0 2 12" className="w-0.5 h-3" fill="#999"><path d="M0 0h2v2H0zM0 5h2v2H0zM0 10h2v2H0z" /></svg>
          <button aria-label="Scroll left" className="flex items-center justify-center w-[15px] h-[15px] ml-[15px] bg-white border border-[#a8a8a8]">
            <svg viewBox="0 0 4 8" className="w-1 h-2" fill="#555"><path d="M4 0v8L0 4z" /></svg>
          </button>
          <div className="flex-1 h-[15px] bg-white border-y border-l border-[#a8a8a8]" />
        </div>
      </div>
    </footer>
  );
}

export default function App() {
  return (
    <div className="flex flex-col h-screen overflow-hidden bg-[#e6e6e6] font-['Open_Sans','Noto_Sans',sans-serif]">
      <TitleBar />
      <Ribbon />
      <FormulaBar />
      <Sheet />
      <SheetTabs />
    </div>
  );
}
